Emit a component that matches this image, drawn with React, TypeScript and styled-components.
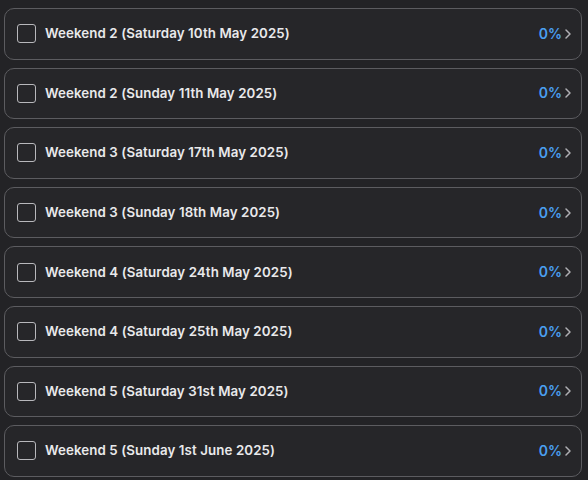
import React from "react";
import styled, { createGlobalStyle } from "styled-components";

const Global = createGlobalStyle`
  html, body { margin: 0; padding: 0; background: #232326; }
  body { font-family: Inter, "Noto Sans", sans-serif; }
`;

const List = styled.div`
  display: flex;
  flex-direction: column;
  gap: 8px;
  padding: 8px 6px 0 4px;
`;

const Card = styled.div`
  box-sizing: border-box;
  height: 51.6px;
  display: flex;
  align-items: center;
  border: 1px solid #5c5c60;
  border-radius: 10px;
  background: #262629;
  padding: 0 9px 0 12px;
`;

const Box = styled.div`
  box-sizing: border-box;
  width: 19px;
  height: 19px;
  border: 1.3px solid #b8b8bc;
  border-radius: 3px;
  flex-shrink: 0;
`;

const Label = styled.div`
  margin-left: 9px;
  flex: 1;
  color: #e9e9eb;
  font-size: 13.3px;
  font-weight: 600;
  letter-spacing: 0.1px;
  margin-top: -1px;
`;

const Pct = styled.span`
  color: #4a9ff0;
  font-size: 14px;
  font-weight: 600;
  margin-top: -1px;
`;

const Chev = styled.svg`
  margin-left: 2px;
  width: 8px;
  height: 12px;
`;

const items = [
  "Weekend 2 (Saturday 10th May 2025)",
  "Weekend 2 (Sunday 11th May 2025)",
  "Weekend 3 (Saturday 17th May 2025)",
  "Weekend 3 (Sunday 18th May 2025)",
  "Weekend 4 (Saturday 24th May 2025)",
  "Weekend 4 (Saturday 25th May 2025)",
  "Weekend 5 (Saturday 31st May 2025)",
  "Weekend 5 (Sunday 1st June 2025)",
];

export default function App() {
  return (
    <>
      <Global />
      <List>
        {items.map((t) => (
          <Card key={t}>
            <Box />
            <Label>{t}</Label>
            <Pct>0%</Pct>
            <Chev viewBox="0 0 8 12">
              <path d="M2 2 L6 6 L2 10" fill="none" stroke="#b0b0b4" strokeWidth="1.5" strokeLinecap="round" strokeLinejoin="round" />
            </Chev>
          </Card>
        ))}
      </List>
    </>
  );
}
